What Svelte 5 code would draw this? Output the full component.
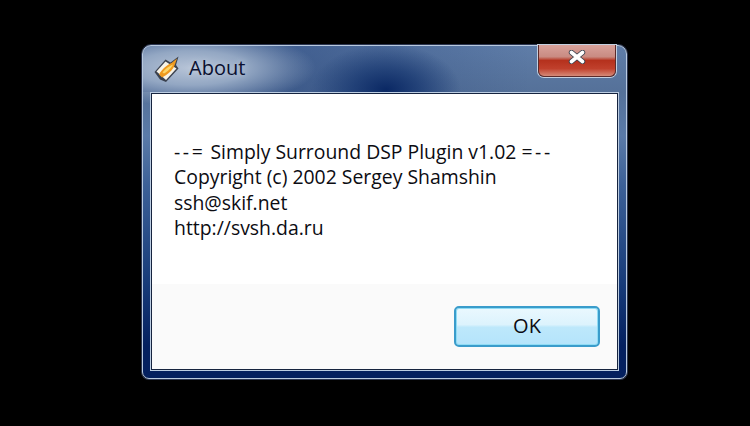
<script lang="ts">
  // dashes in the first line are drawn wider than the rest of the text
  const lines = [
    { text: 'Simply Surround DSP Plugin v1.02', before: '--=', after: '=--' },
    { text: 'Copyright (c) 2002 Sergey Shamshin' },
    { text: 'ssh@skif.net' },
    { text: 'http://svsh.da.ru' }
  ];
</script>

<div class="screen">
  <div class="window" role="dialog" aria-label="About">
    <div class="titlebar">
      <svg class="app-icon" viewBox="0 0 28 28" width="28" height="28" aria-hidden="true">
        <path d="M1.5 17 L12.5 4.5 L17.5 7.5 L25.5 1.5 L23 10 L25.5 13.5 L13 27 L7 24.5 Z" fill="#22262f" opacity="0.8" />
        <path d="M3.5 16.5 L12.5 6.5 L23.5 13.5 L13 25 Z" fill="#f6f3e8" />
        <path d="M6 19.5 C9.5 13.5 14 10 18.5 8 L24 3.5 L21.5 10.5 C20 15 15 19.5 9 22.5 Z" fill="#ee9a20" />
        <path d="M9.5 17.5 C12 14 16 11 20 9.5 C18.5 13 14.5 16.5 11 18.5 Z" fill="#fcd667" />
      </svg>
      <span class="title">About</span>
      <button class="close" aria-label="Close">
        <svg viewBox="0 0 18 14" width="18" height="14" aria-hidden="true">
          <path d="M3.5 2.5 L14.5 11.5 M14.5 2.5 L3.5 11.5" stroke="#39404d" stroke-width="5.4" stroke-linecap="round" />
          <path d="M3.5 2.5 L14.5 11.5 M14.5 2.5 L3.5 11.5" stroke="#fff" stroke-width="3.6" stroke-linecap="round" />
        </svg>
      </button>
    </div>
    <div class="client">
      <div class="message">
        {#each lines as line}
          <p>
            {#if line.before}<span class="wide">{line.before}</span>{' '}{/if}{line.text}{#if line.after}{' '}<span class="wide">{line.after}</span>{/if}
          </p>
        {/each}
      </div>
      <div class="footer">
        <button class="ok">OK</button>
      </div>
    </div>
  </div>
</div>

<style>
  :global(body) {
    margin: 0;
    background: #000;
  }

  .screen {
    width: 750px;
    height: 426px;
    box-sizing: border-box;
    padding: 45px 123px 47px 142px;
    background: #000;
    font-family: "Open Sans", "Noto Sans", sans-serif;
  }

  /* ── Window frame ────────────────────────────────────────────── */
  .window {
    height: 100%;
    box-sizing: border-box;
    display: flex;
    flex-direction: column;
    border: 1px solid #b9cadf;
    border-radius: 9px 9px 7px 7px;
    box-shadow: 0 0 0 1px #2b3550;
    padding: 0 7px 7px 7px;
    background:
      radial-gradient(ellipse 125px 38px at 48px 22px, #b7c4d7 0%, #93a7c3 45%, rgba(130, 152, 185, 0) 100%),
      radial-gradient(ellipse 75px 46px at 243px 44px, #0a2864 0%, rgba(20, 52, 110, 0.7) 45%, rgba(60, 90, 140, 0) 100%),
      linear-gradient(90deg, rgba(40, 70, 125, 0.55) 30%, rgba(40, 70, 125, 0) 80%) 0 0 / 100% 46px no-repeat,
      linear-gradient(#5f7da8 0, #557199 46px, #5a7aa8 90px, #3c6097 140px, #163a78 240px, #04205f 300px, #04205f 100%);
  }

  .titlebar {
    flex: 0 0 46px;
    display: flex;
    align-items: center;
    padding-left: 3px;
    gap: 8px;
    position: relative;
  }

  .app-icon {
    flex-shrink: 0;
    margin-top: -1px;
  }

  .title {
    font-size: 20px;
    color: #0b1030;
    margin-top: -4px;
    text-shadow: 0 0 6px #c4d0e0;
  }

  .close {
    position: absolute;
    top: -1px;
    right: 3px;
    width: 78px;
    height: 32px;
    padding: 0 0 7px;
    display: flex;
    align-items: center;
    justify-content: center;
    box-sizing: border-box;
    border: 1px solid #5b2a2a;
    border-top: none;
    border-radius: 0 0 6px 6px;
    box-shadow: 0 0 0 1px #c3d0e0;
    background: linear-gradient(#d8a29b 0, #c98b82 38%, #b5311d 50%, #c0402c 76%, #d58a78 100%);
  }

  /* ── Client area ─────────────────────────────────────────────── */
  .client {
    flex: 1;
    min-height: 0;
    display: flex;
    flex-direction: column;
    margin: 1px;
    border: 1px solid #16243f;
    background: #fff;
    box-shadow: 0 0 0 1px #bccde2;
  }

  .message {
    flex: 1;
    padding: 45px 20px 0 22px;
    font-size: 19.4px;
    line-height: 25.4px;
    color: #0c0c12;
  }

  .message p {
    margin: 0;
    white-space: nowrap;
  }

  .wide {
    letter-spacing: 2.6px;
  }

  .footer {
    flex: 0 0 85px;
    box-sizing: border-box;
    display: flex;
    justify-content: flex-end;
    align-items: flex-start;
    padding: 22px 17px 0 0;
    background: #fafafa;
  }

  .ok {
    width: 146px;
    height: 41px;
    box-sizing: border-box;
    border: 2px solid #3a9ccb;
    border-radius: 5px;
    background: linear-gradient(#eaf8fe 0, #dcf3fd 45%, #bde8fb 52%, #b4e4fb 100%);
    box-shadow: inset 0 0 0 1px #8fdcf5;
    font-family: inherit;
    font-size: 20px;
    color: #0c0c12;
    padding: 0 0 3px;
  }
</style>
